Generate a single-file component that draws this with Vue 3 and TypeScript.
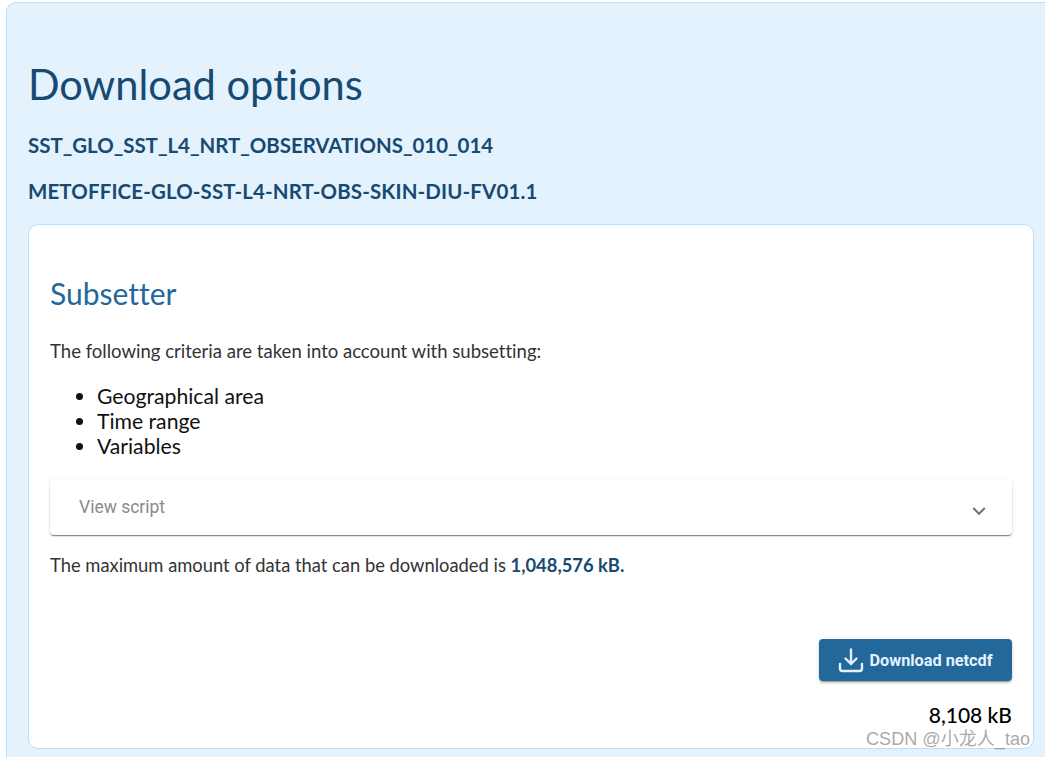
<script setup lang="ts">
const criteria: string[] = ['Geographical area', 'Time range', 'Variables']
</script>

<template>
  <div class="page">
    <section class="panel">
      <h1 class="title">Download options</h1>
      <h2 class="code">SST_GLO_SST_L4_NRT_OBSERVATIONS_010_014</h2>
      <h2 class="code dataset">METOFFICE-GLO-SST-L4-NRT-OBS-SKIN-DIU-FV01.1</h2>
      <div class="card">
        <h3 class="card-title">Subsetter</h3>
        <p class="text">The following criteria are taken into account with subsetting:</p>
        <ul class="criteria">
          <li v-for="item in criteria" :key="item">{{ item }}</li>
        </ul>
        <div class="script-row">
          <span>View script</span>
          <svg class="chevron" width="26" height="26" viewBox="0 0 24 24">
            <path d="M7.41 8.59 12 13.17l4.59-4.58L18 10l-6 6-6-6z" fill="#757575" />
          </svg>
        </div>
        <p class="text limit">The maximum amount of data that can be downloaded is <b>1,048,576 kB.</b></p>
        <div class="actions">
          <button class="download" type="button">
            <svg width="26" height="26" viewBox="0 0 26 26" fill="none" stroke="#e3f2fd" stroke-width="2.400" stroke-linecap="round" stroke-linejoin="round">
              <path d="M13 2.500v14.500M7.500 11.500 13 17l5.500-5.500" />
              <path d="M2 17v4.500a2.500 2.500 0 0 0 2.500 2.500h17a2.500 2.500 0 0 0 2.500-2.500V17" />
            </svg>
            <span>Download netcdf</span>
          </button>
          <div class="size">8,108 kB</div>
        </div>
      </div>
    </section>
    <div class="watermark">CSDN @小龙人_tao</div>
  </div>
</template>

<style scoped>
.page {
  width: 1045px;
  height: 757px;
  overflow: hidden;
  position: relative;
  background: #fff;
  font-family: Lato, "Liberation Sans", sans-serif;
  font-variant-ligatures: none;
}
.panel {
  margin: 2px 0 0 6px;
  width: 1060px;
  height: 800px;
  box-sizing: border-box;
  padding: 53px 0 0 21px;
  background: #e3f2fd;
  border: 1px solid #bbdefb;
  border-radius: 10px;
}
.title {
  margin: 0;
  font-size: 41.600px;
  line-height: 56px;
  font-weight: 400;
  color: #174a73;
}
.code {
  margin: 19px 0 0;
  font-size: 20.450px;
  line-height: 29px;
  font-weight: 700;
  color: #174a73;
}
.code + .code {
  margin-top: 17px;
}
.dataset {
  letter-spacing: 0.15px;
}
.card {
  margin-top: 18px;
  width: 1006px;
  height: 525px;
  box-sizing: border-box;
  padding: 49px 21px 0;
  background: #fff;
  border: 1px solid #bbdefb;
  border-radius: 10px;
}
.card-title {
  margin: 0;
  font-size: 30px;
  line-height: 39px;
  font-weight: 400;
  color: #23689b;
}
.text {
  margin: 0;
  font-size: 18.550px;
  line-height: 26px;
  color: #333;
}
.card-title + .text {
  margin-top: 25px;
}
.criteria {
  margin: 20px 0 0;
  padding: 0 0 0 47px;
  font-size: 21.200px;
  line-height: 25px;
  color: #111;
}
.script-row {
  margin-top: 20px;
  height: 56px;
  padding: 0 20px 0 29px;
  display: flex;
  align-items: center;
  justify-content: space-between;
  border-radius: 4px;
  background: #fff;
  box-shadow: 0 2px 1px -1px rgba(0, 0, 0, 0.3), 0 1px 1px 0 rgba(0, 0, 0, 0.2), 0 1px 3px 0 rgba(0, 0, 0, 0.16);
  font-family: Roboto, "Liberation Sans", sans-serif;
  font-size: 17.500px;
  color: #8a8a8a;
}
.chevron {
  margin-top: 7px;
}
.limit {
  margin-top: 17px;
  font-size: 18.350px;
}
.limit b {
  font-weight: 700;
  color: #174a73;
}
.actions {
  margin-top: 61px;
  display: flex;
  flex-direction: column;
  align-items: flex-end;
}
.download {
  width: 193px;
  height: 42px;
  padding: 0;
  display: flex;
  align-items: center;
  justify-content: center;
  gap: 5px;
  border: 0;
  border-radius: 4px;
  background: #23689b;
  box-shadow: 0 3px 1px -2px rgba(0, 0, 0, 0.2), 0 2px 2px 0 rgba(0, 0, 0, 0.14), 0 1px 5px 0 rgba(0, 0, 0, 0.12);
  font-family: Roboto, "Liberation Sans", sans-serif;
  font-size: 16.300px;
  font-weight: 700;
  color: #e3f2fd;
}
.size {
  margin-top: 21px;
  font-size: 21px;
  line-height: 26px;
  font-weight: 500;
  color: #000;
}
.watermark {
  position: absolute;
  left: 866px;
  top: 727px;
  font-family: "Liberation Sans", "Noto Sans CJK SC", sans-serif;
  font-size: 18.100px;
  line-height: 24px;
  color: rgba(110, 110, 110, 0.6);
  white-space: nowrap;
}
</style>
